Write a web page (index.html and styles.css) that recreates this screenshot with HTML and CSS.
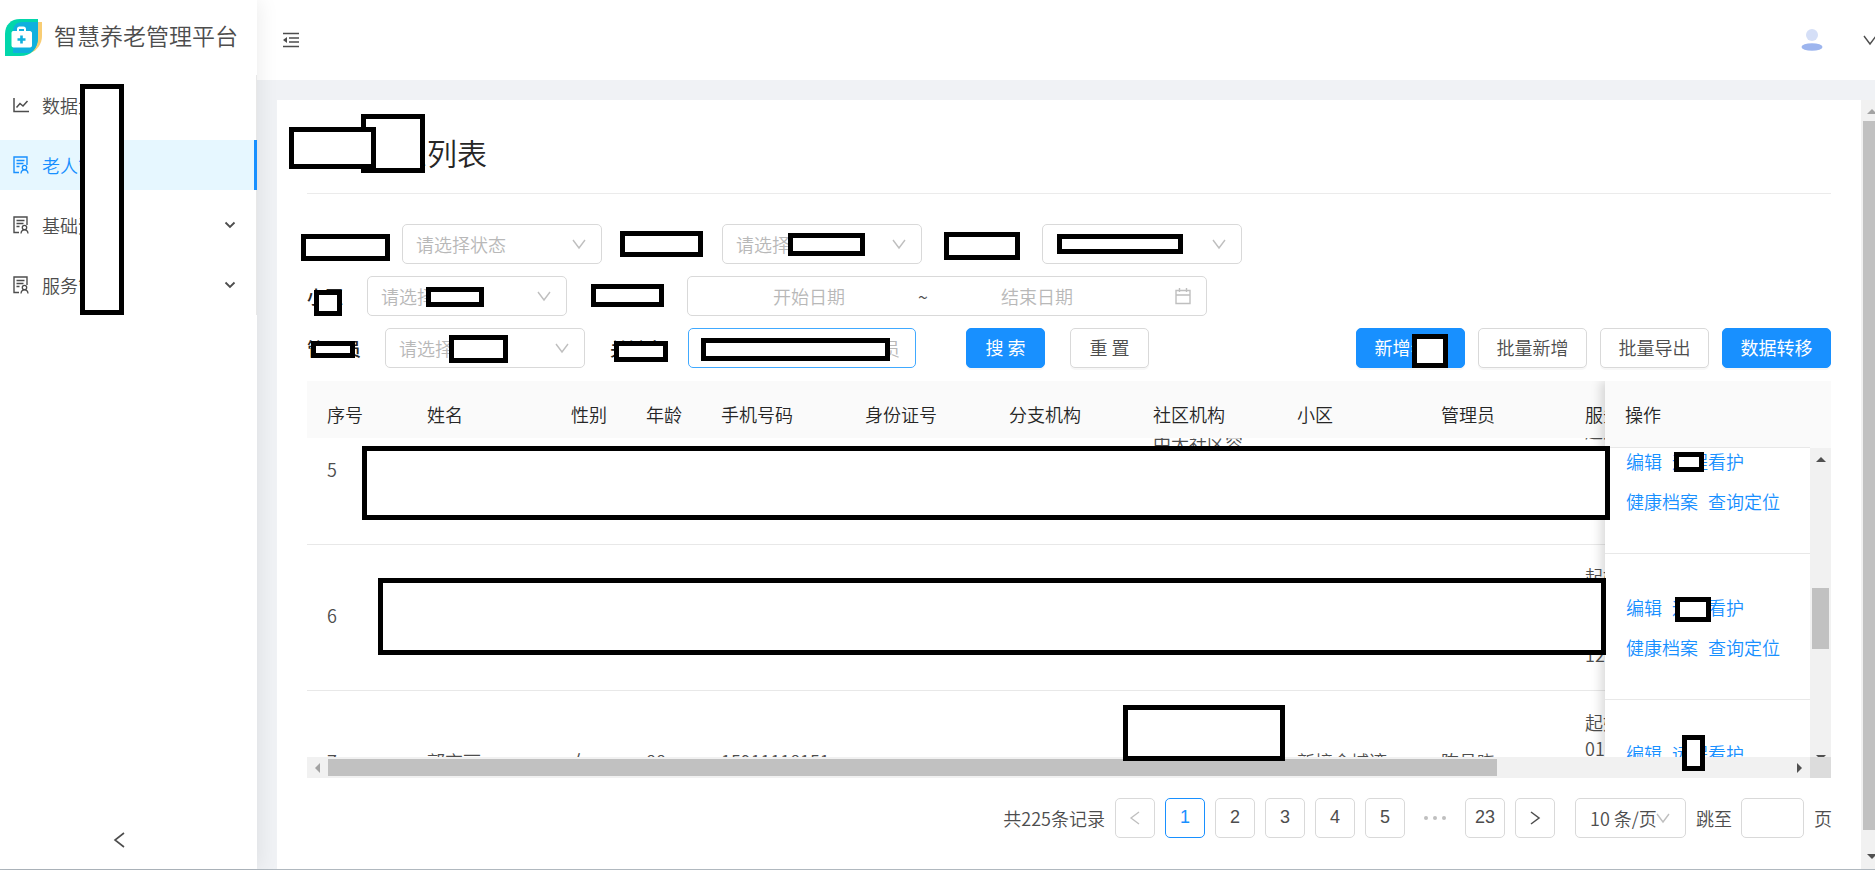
FILE: index.html
```html
<!DOCTYPE html>
<html lang="zh-CN">
<head>
<meta charset="utf-8">
<title>智慧养老管理平台</title>
<link rel="stylesheet" href="styles.css">
</head>
<body>
<svg class="defs" aria-hidden="true">
  <symbol id="down" viewBox="0 0 14 14"><path d="M1 3l6 8 6-8" fill="none" stroke="currentColor" stroke-width="1.4"/></symbol>
  <symbol id="down-bold" viewBox="0 0 12 12"><path d="M1.5 3.5L6 8l4.500-4.500" fill="none" stroke="currentColor" stroke-width="1.800"/></symbol>
  <symbol id="audit" viewBox="0 0 16 18"><path d="M6 16.500H1V1h13v8M3.500 4.500h8M3.500 7.500h7M3.500 10.500h3" fill="none" stroke="currentColor" stroke-width="1.400"/><circle cx="11.500" cy="11.500" r="2.200" fill="none" stroke="currentColor" stroke-width="1.300"/><path d="M8 17.500c.2-2.400 1.500-3.600 3.500-3.600s3.300 1.200 3.500 3.600" fill="none" stroke="currentColor" stroke-width="1.300"/></symbol>
</svg>
<div class="app">
  <aside class="sidebar">
    <div class="brand">
      <svg class="brand-logo" viewBox="0 0 37 37" aria-hidden="true">
        <path d="M16 3h21v14c0 8-5 15-12 17z" fill="#f8cd74"/>
        <path d="M0 37V15C0 6 6 0 15 0h18v18c0 12-7 19-18 19z" fill="#02d6ab"/>
        <path d="M8 34V13C8 7 11 3 18 3h15v15c0 9-4 14-9 16z" fill="#0fb0de"/>
        <path d="M8 12h4V10c0-1.500 1-2.500 2.500-2.500h4c1.500 0 2.500 1 2.500 2.500v2h4c1 0 2 1 2 2v12.500c0 1-1 2-2 2H8.500c-1 0-2-1-2-2V14c0-1 .7-2 1.500-2zm6 0h5v-2h-5z" fill="#fff"/>
        <path d="M16.500 16.500v8M12.500 20.500h8" stroke="#0fb0de" stroke-width="2.600"/>
      </svg>
      <span class="brand-name">智慧养老管理平台</span>
    </div>
    <nav class="menu">
      <a class="menu-item" href="#"><svg class="menu-icon" viewBox="0 0 16 18" aria-hidden="true"><path d="M1 2v13.500h15M3.500 11.500l3.500-4 3 2.500 4.500-5" fill="none" stroke="currentColor" stroke-width="1.500"/></svg><span>数据大屏</span></a>
      <a class="menu-item active" href="#"><svg class="menu-icon"><use href="#audit"/></svg><span>老人管理</span></a>
      <a class="menu-item" href="#"><svg class="menu-icon"><use href="#audit"/></svg><span>基础资料</span><svg class="menu-arrow"><use href="#down-bold"/></svg></a>
      <a class="menu-item" href="#"><svg class="menu-icon"><use href="#audit"/></svg><span>服务管理</span><svg class="menu-arrow"><use href="#down-bold"/></svg></a>
    </nav>
    <button class="collapse" aria-label="收起"><svg viewBox="0 0 12 16"><path d="M11 1L2 8l9 7" fill="none" stroke="currentColor" stroke-width="1.600"/></svg></button>
    <div class="mask m-menu"></div>
  </aside>

  <div class="main">
    <header class="topbar">
      <button class="fold" aria-label="折叠菜单"><svg viewBox="0 0 16 16"><path d="M0 1.500h16M6 6h10M6 10h10M0 14.500h16" stroke="currentColor" stroke-width="1.500"/><path d="M4 5v6L0 8z" fill="currentColor"/></svg></button>
      <div class="user">
        <svg class="avatar" viewBox="0 0 22 24" aria-hidden="true"><circle cx="11" cy="7" r="6" fill="#d5dff7"/><ellipse cx="11" cy="19" rx="10.500" ry="3.800" fill="#9db5ee"/></svg>
        <svg class="user-arrow"><use href="#down"/></svg>
      </div>
    </header>

    <div class="content">
      <main class="card">
        <div class="title-bar">
          <h1>老人信息列表</h1>
          <div class="mask m-title-b"></div>
          <div class="mask m-title-a"></div>
        </div>

        <form class="filters">
          <div class="row">
            <span class="label four"></span>
            <div class="select"><select aria-label="状态"><option>请选择状态</option></select><svg><use href="#down"/></svg></div>
            <span class="label four"></span>
            <div class="select"><select aria-label="机构"><option>请选择</option></select><svg><use href="#down"/></svg></div>
            <span class="label four"></span>
            <div class="select"><select aria-label="社区"><option></option></select><svg><use href="#down"/></svg></div>
          </div>
          <div class="row">
            <label class="label two" for="area">小区</label>
            <div class="select"><select id="area"><option>请选择</option></select><svg><use href="#down"/></svg></div>
            <span class="label four"></span>
            <div class="range">
              <input aria-label="开始日期" placeholder="开始日期"><span>~</span><input aria-label="结束日期" placeholder="结束日期">
              <svg viewBox="0 0 16 18" aria-hidden="true"><path d="M1 3.500h14v13H1zM1 8h14M4.500 1v4M11.500 1v4" fill="none" stroke="currentColor" stroke-width="1.400"/></svg>
            </div>
          </div>
          <div class="row">
            <label class="label three" for="manager">管理员</label>
            <div class="select"><select id="manager"><option>请选择</option></select><svg><use href="#down"/></svg></div>
            <label class="label three" for="keyword">关键字</label>
            <input class="keyword" id="keyword" placeholder="请输入姓名、手机、人员">
            <div class="actions">
              <button type="button" class="btn primary">搜 索</button>
              <button type="button" class="btn">重 置</button>
            </div>
            <div class="tools">
              <button type="button" class="btn primary wide">新增老人</button>
              <button type="button" class="btn wide">批量新增</button>
              <button type="button" class="btn wide">批量导出</button>
              <button type="button" class="btn primary wide">数据转移</button>
              <div class="mask m-add"></div>
            </div>
          </div>
          <div class="mask m-l1"></div><div class="mask m-l2"></div><div class="mask m-s2"></div><div class="mask m-l3"></div><div class="mask m-s3"></div>
          <div class="mask m-area"></div><div class="mask m-area-s"></div><div class="mask m-date"></div>
          <div class="mask m-mgr"></div><div class="mask m-mgr-s"></div><div class="mask m-key"></div><div class="mask m-key-s"></div>
        </form>

        <section class="grid">
          <div class="panes">
            <div class="pane-main">
              <table class="data">
                <colgroup><col class="c100"><col class="c144"><col class="c75"><col class="c75"><col class="c144"><col class="c144"><col class="c144"><col class="c144"><col class="c144"><col class="c144"><col class="c144"></colgroup>
                <thead><tr><th>序号</th><th>姓名</th><th>性别</th><th>年龄</th><th>手机号码</th><th>身份证号</th><th>分支机构</th><th>社区机构</th><th>小区</th><th>管理员</th><th>服务时间</th></tr></thead>
              </table>
              <div class="viewport">
                <table class="data scrolled">
                  <colgroup><col class="c100"><col class="c144"><col class="c75"><col class="c75"><col class="c144"><col class="c144"><col class="c144"><col class="c144"><col class="c144"><col class="c144"><col class="c144"></colgroup>
                  <tbody>
                    <tr><td>5</td><td></td><td></td><td></td><td></td><td></td><td></td><td>中大社区容<br>&nbsp;<br>&nbsp;</td><td></td><td></td><td>起始<br>01-01<br>结束<br>&nbsp;</td></tr>
                    <tr><td>6</td><td></td><td></td><td></td><td></td><td></td><td></td><td></td><td></td><td></td><td>起始<br>01-01<br>结束<br>12-31</td></tr>
                    <tr><td>7</td><td>郭京丽</td><td>女</td><td>88</td><td>15911118151</td><td></td><td></td><td></td><td>新接金城湾</td><td>陈昌晓</td><td>起始<br>01-01<br>结束<br>12-31</td></tr>
                  </tbody>
                </table>
              </div>
            </div>
            <div class="pane-fixed">
              <div class="fixed-head">操作</div>
              <div class="fixed-body">
                <div class="fixed-view">
                  <div class="ops first"><p><a href="#">编辑</a><a href="#">远程看护</a></p><p><a href="#">健康档案</a><a href="#">查询定位</a></p></div>
                  <div class="ops"><p><a href="#">编辑</a><a href="#">远程看护</a></p><p><a href="#">健康档案</a><a href="#">查询定位</a></p></div>
                  <div class="ops"><p><a href="#">编辑</a><a href="#">远程看护</a></p><p><a href="#">健康档案</a><a href="#">查询定位</a></p></div>
                </div>
                <div class="vbar"><i class="tri up"></i><i class="vthumb"></i><i class="tri down"></i></div>
              </div>
            </div>
          </div>
          <div class="hbar"><i class="tri left"></i><span class="htrack"><i class="hthumb"></i></span><i class="tri right"></i><i class="corner"></i></div>
          <div class="mask m-r5"></div><div class="mask m-r6"></div><div class="mask m-r7"></div>
          <div class="mask m-o5"></div><div class="mask m-o6"></div><div class="mask m-o7"></div>
        </section>

        <nav class="pager" aria-label="分页">
          <span class="total">共225条记录</span>
          <button class="page off" aria-label="上一页"><svg viewBox="0 0 12 16"><path d="M10 2L2 8l8 6" fill="none" stroke="currentColor" stroke-width="1.300"/></svg></button>
          <button class="page current">1</button>
          <button class="page">2</button>
          <button class="page">3</button>
          <button class="page">4</button>
          <button class="page">5</button>
          <span class="dots"><i></i><i></i><i></i></span>
          <button class="page">23</button>
          <button class="page" aria-label="下一页"><svg viewBox="0 0 12 16"><path d="M2 2l8 6-8 6" fill="none" stroke="currentColor" stroke-width="1.500"/></svg></button>
          <div class="select size"><select aria-label="每页条数"><option>10 条/页</option></select><svg><use href="#down"/></svg></div>
          <label class="two" for="jump">跳至</label>
          <input class="jump" id="jump">
          <span class="one">页</span>
        </nav>
      </main>
      <div class="page-bar"><i class="tri up"></i><i class="page-thumb"></i><i class="tri down"></i></div>
    </div>
  </div>
</div>
</body>
</html>
```
FILE: styles.css
```css
* { box-sizing: border-box; }
body {
  margin: 0;
  overflow: hidden;
  font: 350 18px/26px "Noto Sans CJK SC", sans-serif;
  color: #4d4d4d;
  background: #f0f2f5;
}
h1, p { margin: 0; }
a { text-decoration: none; }
button, input, select { font: inherit; color: inherit; outline: none; }
.defs { position: absolute; width: 0; height: 0; }
.app { display: flex; height: 100vh; border-bottom: 1px solid #b0b8bf; }

/* black outlined cover boxes */
.mask { position: absolute; background: #fff; border: 5px solid #000; z-index: 5; }

/* sidebar */
.sidebar {
  position: relative;
  z-index: 2;
  flex: none;
  display: flex;
  flex-direction: column;
  width: 257px;
  background: #fff;
  box-shadow: 2px 0 20px rgba(0, 0, 0, .08);
}
.brand { display: flex; align-items: center; gap: 12px; height: 75px; padding-left: 5px; white-space: nowrap; }
.brand-logo { flex: none; width: 37px; height: 37px; }
.brand-name { font-size: 23px; line-height: 30px; padding-bottom: 6px; }
.menu { display: flex; flex-direction: column; gap: 10px; height: 240px; padding-top: 5px; border-right: 1px solid #e8e8e8; }
.menu-item { display: flex; align-items: center; height: 50px; padding: 0 20px 0 13px; gap: 13px; color: inherit; }
.menu-item.active { color: #1890ff; background: #e6f7ff; border-right: 3px solid #1890ff; margin-right: -1px; }
.menu-icon { width: 16px; height: 18px; }
.menu-arrow { width: 12px; height: 12px; margin-left: auto; }
.collapse { display: flex; width: 12px; padding: 0; margin: auto auto 21px 113px; border: 0; background: none; }
.collapse svg { width: 12px; height: 16px; }
.m-menu { left: 80px; top: 84px; width: 44px; height: 231px; }

/* top bar */
.main { flex: 1; min-width: 0; display: flex; flex-direction: column; }
.topbar { flex: none; display: flex; justify-content: space-between; align-items: center; height: 80px; padding-left: 26px; background: #fff; }
.fold { display: flex; padding: 0; border: 0; background: none; }
.fold svg { width: 16px; height: 16px; }
.user { display: flex; align-items: center; gap: 40px; overflow: hidden; }
.avatar { width: 22px; height: 24px; }
.user-arrow { width: 14px; height: 14px; margin-right: -2px; }

/* content */
.content { flex: 1; min-height: 0; display: flex; padding: 20px 0 0 20px; }
.card { flex: 1; min-width: 0; padding: 0 30px; background: #fff; overflow: hidden; }
.title-bar { position: relative; height: 94px; padding-top: 32px; border-bottom: 1px solid #ebebeb; }
h1 { font-size: 30px; font-weight: 350; line-height: 40px; color: #262626; }
.m-title-a { left: -18px; top: 27px; width: 87px; height: 42px; }
.m-title-b { left: 54px; top: 14px; width: 64px; height: 59px; }

/* filters */
.filters { position: relative; display: flex; flex-direction: column; gap: 12px; padding: 30px 0 13px; }
.row { display: flex; align-items: center; gap: 25px; height: 40px; white-space: nowrap; }
.label { flex: none; font-weight: 500; color: #262626; }
.two { width: 35px; }
.three { width: 53px; }
.four { width: 70px; }
.one { width: 17px; }
.select { position: relative; width: 200px; height: 40px; }
.select select { appearance: none; width: 100%; height: 100%; padding: 0 36px 0 13px; border: 1px solid #d9d9d9; border-radius: 5px; background: #fff; color: #b8b8b8; }
.select svg { position: absolute; right: 16px; top: 13px; width: 14px; height: 14px; color: #bfbfbf; }
.range { display: flex; align-items: center; width: 520px; height: 40px; padding: 0 15px 0 13px; border: 1px solid #d9d9d9; border-radius: 5px; }
.range input { width: 216px; min-width: 0; border: 0; padding: 0; text-align: center; background: none; }
.range span { width: 12px; text-align: center; }
.range svg { width: 16px; height: 18px; margin-left: auto; color: #bfbfbf; }
::placeholder { color: #b8b8b8; opacity: 1; }
.keyword { width: 228px; height: 40px; padding: 0 13px; border: 1px solid #40a9ff; border-radius: 5px; }
.actions { display: flex; gap: 25px; padding-left: 25px; }
.tools { position: relative; display: flex; gap: 13px; margin-left: auto; }
.btn { width: 79px; height: 40px; padding: 0 0 2px; border: 1px solid #d9d9d9; border-radius: 5px; background: #fff; box-shadow: 0 2px 0 rgba(0, 0, 0, .03); white-space: nowrap; }
.btn.wide { width: 109px; }
.btn.primary { color: #fff; font-weight: 400; border-color: #1890ff; background: #1890ff; }
.m-l1 { left: -6px; top: 40px; width: 89px; height: 27px; }
.m-l2 { left: 313px; top: 37px; width: 83px; height: 26px; }
.m-s2 { left: 481px; top: 39px; width: 77px; height: 23px; }
.m-l3 { left: 637px; top: 38px; width: 76px; height: 28px; }
.m-s3 { left: 750px; top: 40px; width: 126px; height: 20px; }
.m-area { left: 7px; top: 96px; width: 28px; height: 26px; }
.m-area-s { left: 119px; top: 93px; width: 58px; height: 20px; }
.m-date { left: 284px; top: 90px; width: 73px; height: 23px; }
.m-mgr { left: 4px; top: 147px; width: 44px; height: 17px; }
.m-mgr-s { left: 142px; top: 141px; width: 59px; height: 28px; }
.m-key { left: 307px; top: 147px; width: 54px; height: 21px; }
.m-key-s { left: 394px; top: 144px; width: 189px; height: 23px; }
.m-add { left: 56px; top: 6px; width: 36px; height: 34px; }

/* table */
.grid { position: relative; }
.panes { position: relative; height: 376px; overflow: hidden; }
.data { table-layout: fixed; width: 1402px; border-collapse: collapse; }
.c100 { width: 100px; }
.c144 { width: 144px; }
.c75 { width: 75px; }
th { height: 57px; padding: 8px 20px 0; text-align: left; font-weight: 350; color: #262626; background: #fafafa; white-space: nowrap; }
td { height: 146px; padding: 0 20px 4px; border-bottom: 1px solid #e8e8e8; white-space: nowrap; }
.viewport { height: 319px; overflow: hidden; }
.scrolled { margin-top: -40px; }
.pane-fixed { position: absolute; top: 0; right: 0; bottom: 0; display: flex; flex-direction: column; width: 226px; background: #fff; box-shadow: -4px 0 10px rgba(0, 0, 0, .15); }
.fixed-head { height: 67px; padding: 20px; color: #262626; background: linear-gradient(#e8e8e8, #e8e8e8) left bottom / 205px 1px no-repeat #fafafa; }
.fixed-body { flex: 1; min-height: 0; display: flex; }
.fixed-view { flex: 1; overflow: hidden; }
.ops { display: flex; flex-direction: column; gap: 14px; height: 146px; padding: 40px 0 0 21px; border-bottom: 1px solid #e8e8e8; }
.ops.first { margin-top: -40px; }
.ops p { display: flex; gap: 10px; white-space: nowrap; }
.ops a { color: #1890ff; }
.vbar { display: flex; flex-direction: column; align-items: center; width: 21px; background: #f1f1f1; overflow: hidden; }
.vthumb { flex: none; width: 17px; height: 61px; margin: 126px 0 106px; background: #c1c1c1; }
.tri { flex: none; border: 5px solid transparent; }
.tri.up { border-top: 0; border-bottom-color: #505050; margin-top: 9px; }
.tri.down { border-bottom: 0; border-top-color: #505050; }
.tri.left { border-left: 0; border-right-color: #a3a3a3; margin: 0 8px; }
.tri.right { border-right: 0; border-left-color: #505050; margin: 0 8px; }
.hbar { display: flex; align-items: center; height: 21px; background: #f1f1f1; }
.htrack { flex: 1; height: 17px; }
.hthumb { display: block; width: 80%; height: 17px; background: #c1c1c1; }
.corner { width: 21px; height: 21px; background: #dcdcdc; }
.m-r5 { left: 55px; right: 221px; top: 65px; height: 74px; }
.m-r6 { left: 71px; right: 225px; top: 197px; height: 77px; }
.m-r7 { left: 816px; top: 324px; width: 162px; height: 56px; }
.m-o5 { right: 127px; top: 71px; width: 30px; height: 20px; }
.m-o6 { right: 120px; top: 216px; width: 36px; height: 25px; }
.m-o7 { right: 126px; top: 354px; width: 23px; height: 36px; }

/* pagination */
.pager { display: flex; justify-content: flex-end; align-items: center; gap: 10px; padding-top: 20px; white-space: nowrap; }
.page { display: flex; align-items: center; justify-content: center; width: 40px; height: 40px; padding: 0 0 2px; border: 1px solid #d9d9d9; border-radius: 5px; background: #fff; font-family: "Liberation Sans", sans-serif; font-weight: 400; }
.page svg { width: 12px; height: 16px; margin-top: 2px; }
.page.current { color: #1890ff; border-color: #1890ff; }
.page.off { color: #bfbfbf; }
.dots { display: flex; justify-content: center; gap: 5px; width: 40px; }
.dots i { width: 4px; height: 4px; border-radius: 50%; background: #bfbfbf; }
.size { width: 111px; margin-left: 10px; }
.size select { color: inherit; padding: 0 0 0 14px; }
.jump { width: 63px; height: 40px; border: 1px solid #d9d9d9; border-radius: 5px; }

/* page scrollbar, partly beyond the window edge */
.page-bar { flex: none; display: flex; flex-direction: column; align-items: center; width: 21px; margin-right: -7px; background: #f1f1f1; }
.page-thumb { flex: 1; width: 17px; margin: 7px 0 24px; background: #c1c1c1; }
.page-bar .up { border-bottom-color: #a3a3a3; }
.page-bar .down { margin-bottom: 10px; }
```
